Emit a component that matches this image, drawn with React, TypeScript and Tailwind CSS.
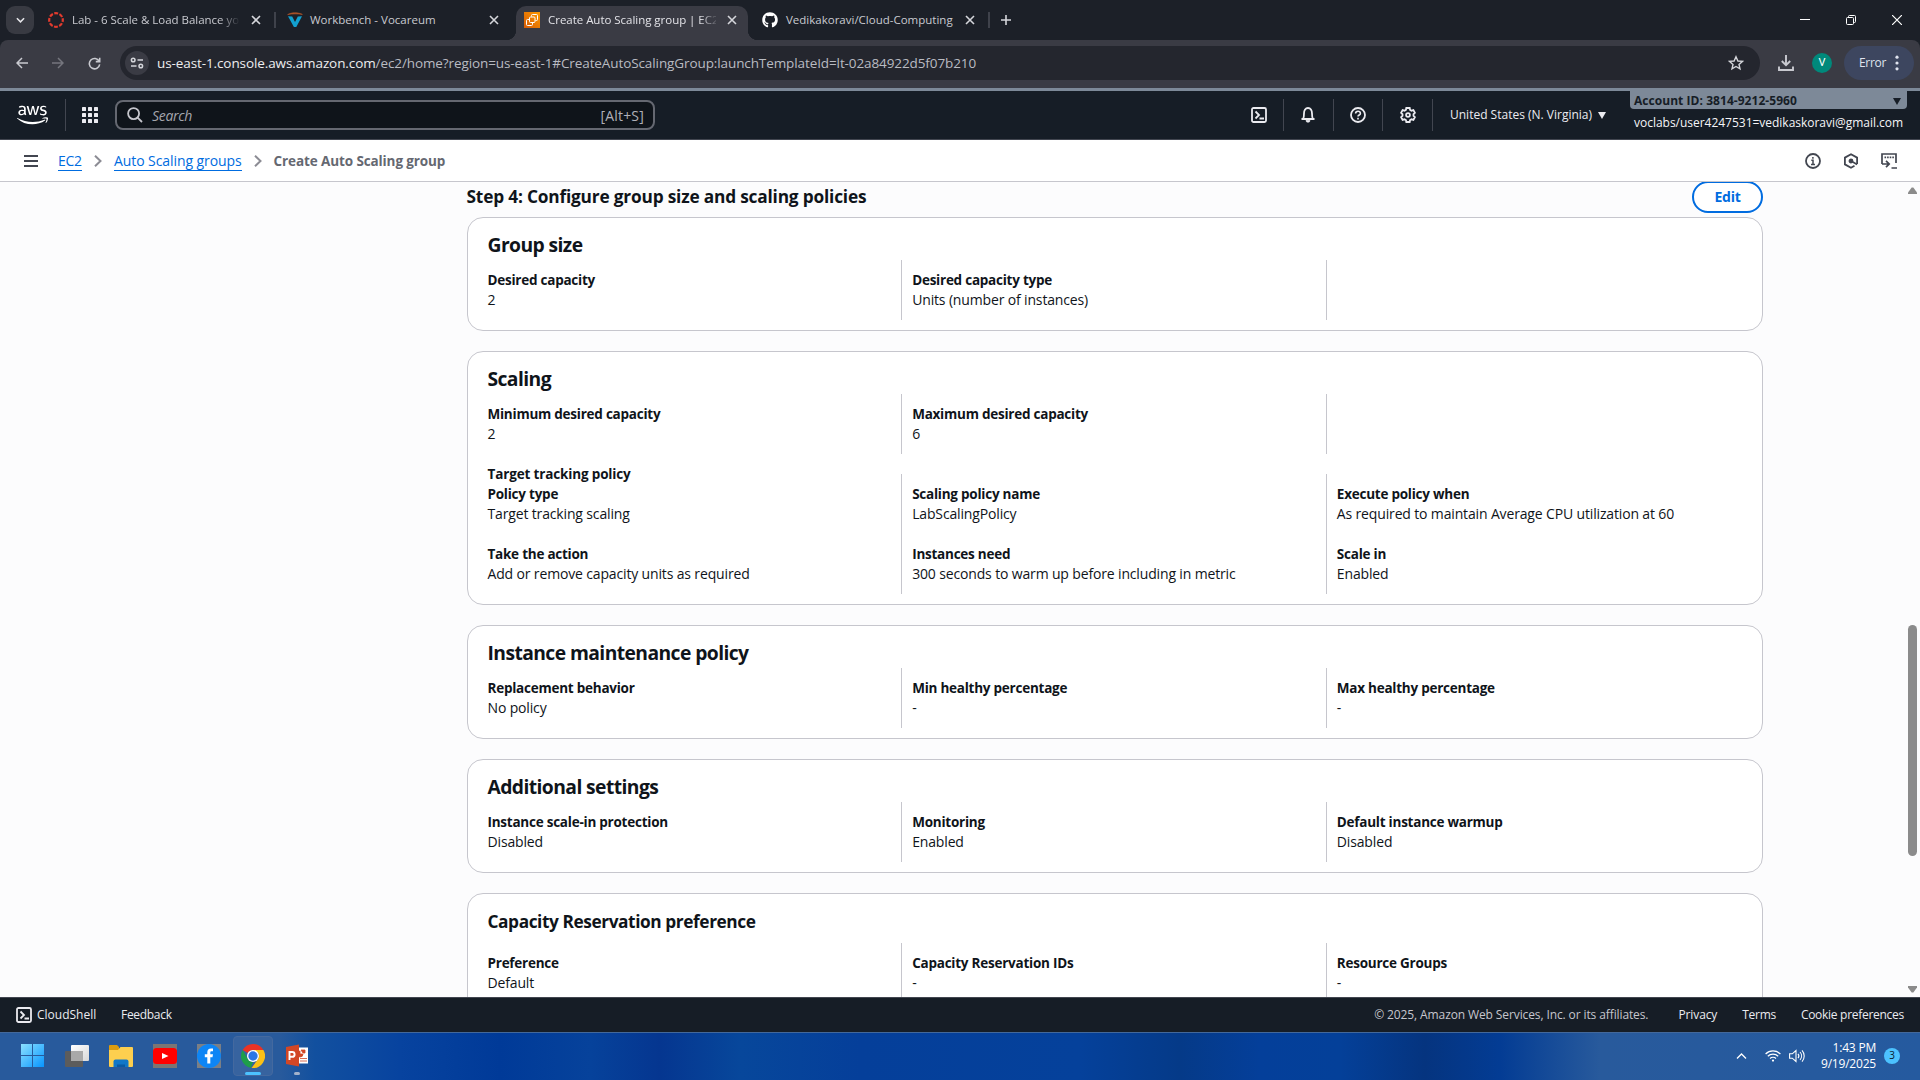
import React from "react";
import { FaAws, FaGithub } from "react-icons/fa6";

type Field = { label: string; value: string } | null;

function CloseX({ className = "" }: { className?: string }) {
  return (
    <svg viewBox="0 0 10 10" className={`h-[10px] w-[10px] shrink-0 ${className}`} stroke="#d5d6db" strokeWidth="1.6" fill="none">
      <path d="M1 1l8 8M9 1L1 9" />
    </svg>
  );
}

function CanvasIcon() {
  return (
    <svg viewBox="0 0 16 16" className="h-4 w-4 shrink-0" fill="none">
      <circle cx="8" cy="8" r="6.8" stroke="#e23b2e" strokeWidth="2.2" strokeDasharray="3.9 1.44" strokeDashoffset="1.95" />
    </svg>
  );
}

function VocareumIcon() {
  return (
    <svg viewBox="0 0 16 16" className="h-4 w-4 shrink-0">
      <path d="M1 4.2l4.2.3L8 10l2.800-5.500 4.200-.3L9.300 15H6.900z" fill="#12a0d0" />
      <path d="M.6 2.600C4.500.2 11 .2 15.400 2.400 11 1.600 5 1.700.6 2.600z" fill="#b4562a" stroke="#b4562a" strokeWidth=".6" />
    </svg>
  );
}

function Ec2Icon() {
  return (
    <svg viewBox="0 0 16 16" className="h-4 w-4 shrink-0">
      <defs>
        <linearGradient id="ec2" x1="0" y1="1" x2="1" y2="0">
          <stop offset="0" stopColor="#d45b07" />
          <stop offset="1" stopColor="#ff9900" />
        </linearGradient>
      </defs>
      <path d="M0 0h16v16H0z" fill="url(#ec2)" />
      <g fill="none" stroke="#fff" strokeWidth="1">
        <rect x="5.500" y="5" width="5.500" height="5.500" rx="1" />
        <path d="M7.500 4.500V3.500a1 1 0 0 1 1-1h4a1 1 0 0 1 1 1v4a1 1 0 0 1-1 1h-1" />
        <path d="M5 7.500H3.500a1 1 0 0 0-1 1v4a1 1 0 0 0 1 1h4a1 1 0 0 0 1-1v-1.500" />
      </g>
    </svg>
  );
}

function TabStrip() {
  return (
    <header className="flex h-10 items-stretch bg-[#1c2028] text-[11.5px] text-[#c9cad0]">
      <div className="flex w-[48px] items-center pl-[6px]">
        <div className="flex h-7 w-7 items-center justify-center rounded-[9px] bg-[#383a42]">
          <svg viewBox="0 0 10 6" className="h-[6px] w-[9px]" fill="none" stroke="#e6e6ea" strokeWidth="1.700">
            <path d="M1 1l4 4 4-4" />
          </svg>
        </div>
      </div>
      <div className="flex w-[228px] items-center">
        <CanvasIcon />
        <span className="ml-2 w-[168px] whitespace-nowrap tracking-[-0.02px] [mask-image:linear-gradient(to_right,black_88%,transparent)]">
          Lab - 6 Scale &amp; Load Balance yo
        </span>
        <CloseX className="ml-[11px]" />
        <i className="ml-[13px] h-4 w-[2px] bg-[#3f424b]" />
      </div>
      <div className="flex w-[240px] items-center pl-[11px]">
        <VocareumIcon />
        <span className="ml-[7px] w-[169px] whitespace-nowrap">Workbench - Vocareum</span>
        <CloseX className="ml-[10px]" />
      </div>
      <div className="relative mt-[6px] flex w-[232px] items-center rounded-t-[10px] bg-[#3a3b44] pb-[6px] pl-2 text-[#e3e3e8]">
        <i className="absolute -left-[10px] bottom-0 h-[10px] w-[10px] bg-[radial-gradient(circle_at_0_0,transparent_10px,#3a3b44_10.500px)]" />
        <i className="absolute -right-[10px] bottom-0 h-[10px] w-[10px] bg-[radial-gradient(circle_at_100%_0,transparent_10px,#3a3b44_10.500px)]" />
        <Ec2Icon />
        <span className="ml-2 w-[168px] whitespace-nowrap tracking-[-0.03px] [mask-image:linear-gradient(to_right,black_90%,transparent_102%)]">
          Create Auto Scaling group | EC2
        </span>
        <CloseX className="ml-[11px]" />
      </div>
      <div className="flex items-center pl-[14px]">
        <FaGithub className="h-4 w-4 text-white" />
        <span className="ml-2 w-[168px] whitespace-nowrap">Vedikakoravi/Cloud-Computing</span>
        <CloseX className="ml-[11px]" />
        <i className="ml-[13px] h-4 w-[2px] bg-[#3f424b]" />
        <svg viewBox="0 0 12 12" className="ml-[10px] h-3 w-3" stroke="#d5d6db" strokeWidth="1.600">
          <path d="M6 1v10M1 6h10" />
        </svg>
      </div>
      <div className="ml-auto flex items-center gap-9 pr-[18px]">
        <svg viewBox="0 0 10 10" className="h-[10px] w-[10px]" stroke="#fff"><path d="M0 4.500h10" /></svg>
        <svg viewBox="0 0 10 10" className="h-[10px] w-[10px]" stroke="#fff" fill="none">
          <rect x=".5" y="2.500" width="7" height="7" rx="1" />
          <path d="M2.500 2.500v-1a1 1 0 0 1 1-1h5a1 1 0 0 1 1 1v5a1 1 0 0 1-1 1h-1" />
        </svg>
        <svg viewBox="0 0 10 10" className="h-[10px] w-[10px]" stroke="#fff" strokeWidth="1.200"><path d="M0 0l10 10M10 0L0 10" /></svg>
      </div>
    </header>
  );
}

function AddressBar() {
  return (
    <div className="bg-[#1c2028]">
      <div className="flex h-12 items-center rounded-t-lg bg-[#3a3b44] pb-[2px] pr-[6px]">
        <div className="flex w-[120px] items-center gap-6 pl-4">
          <svg viewBox="0 0 12 12" className="h-3 w-3" stroke="#c9cad0" strokeWidth="1.500" fill="none"><path d="M12 6H1M6 1L1 6l5 5" /></svg>
          <svg viewBox="0 0 12 12" className="h-3 w-3" stroke="#75767e" strokeWidth="1.500" fill="none"><path d="M0 6h11M6 1l5 5-5 5" /></svg>
          <svg viewBox="0 0 14 14" className="h-[13px] w-[13px]" stroke="#c9cad0" strokeWidth="1.700" fill="none">
            <path d="M12 4.500A5.600 5.600 0 1 0 12.600 8M12.600 .8v4.200H8.400" />
          </svg>
        </div>
        <div className="flex h-[34px] w-[1640px] items-center rounded-full bg-[#24262e] pl-[5px] pr-[16px]">
          <div className="flex h-6 w-6 items-center justify-center rounded-full bg-[#3a3b44]">
            <svg viewBox="0 0 14 12" className="h-3 w-[14px]" fill="none" stroke="#d5d6db" strokeWidth="1.500">
              <circle cx="3.200" cy="3" r="1.800" /><path d="M7.500 3H13M1 9h5.500" /><circle cx="10.800" cy="9" r="1.800" />
            </svg>
          </div>
          <span className="ml-2 whitespace-nowrap text-[13.5px] tracking-[-0.1px] text-[#b9bbc2]">
            <span className="text-[#ededf0]">us-east-1.console.aws.amazon.com</span>
            /ec2/home?region=us-east-1#CreateAutoScalingGroup:launchTemplateId=lt-02a84922d5f07b210
          </span>
          <svg viewBox="0 0 16 16" className="ml-auto h-4 w-4" fill="none" stroke="#d5d6db" strokeWidth="1.400">
            <path d="M8 1.800l1.900 4.200 4.500.4-3.400 3 1 4.500L8 11.500l-4 2.400 1-4.500-3.400-3 4.500-.4z" />
          </svg>
        </div>
        <svg viewBox="0 0 16 16" className="ml-[18px] h-4 w-4" fill="none" stroke="#c9cad0" strokeWidth="1.900">
          <path d="M8 0v10M3.800 6L8 10.200 12.200 6M1 11.500V15h14v-3.500" />
        </svg>
        <div className="ml-[18px] flex h-5 w-5 items-center justify-center rounded-full bg-[#00897b] font-['Roboto'] text-[11px] text-white">V</div>
        <div className="ml-3 flex h-[34px] w-[70px] items-center rounded-full bg-[#3d465f] pl-[15px] text-[12px] text-[#dfe3ee]">
          <span className="w-[26px] tracking-[-0.3px]">Error</span>
          <svg viewBox="0 0 4 16" className="ml-[10px] h-4 w-1" fill="#dfe3ee">
            <circle cx="2" cy="2.200" r="1.600" /><circle cx="2" cy="8" r="1.600" /><circle cx="2" cy="13.800" r="1.600" />
          </svg>
        </div>
      </div>
    </div>
  );
}

function TerminalIcon({ className = "" }: { className?: string }) {
  return (
    <svg viewBox="0 0 16 16" className={`h-4 w-4 shrink-0 ${className}`} fill="none" stroke="#ebebf0" strokeWidth="1.800">
      <rect x="1" y="1" width="14" height="14" rx="1.500" />
      <path d="M4.500 4.500L8 8l-3.500 3.500M8.500 11.500H13" />
    </svg>
  );
}

function NavCell({ children }: { children: React.ReactNode }) {
  return <div className="flex h-8 w-[49.7px] items-center justify-center border-r border-[#424650]">{children}</div>;
}

function AwsNav() {
  return (
    <nav className="flex h-[49px] border-b border-[#424650] bg-[#161d26] text-[12px] text-[#ebebf0]">
      <div className="flex items-center">
        <FaAws className="ml-[17px] h-[26px] w-[31px] text-white" />
        <i className="ml-[17px] h-8 w-px bg-[#424650]" />
        <svg viewBox="0 0 16 16" className="ml-4 h-4 w-4" fill="#ebebf0">
          {[0, 6, 12].map((y) => [0, 6, 12].map((x) => <rect key={`${x}-${y}`} x={x} y={y} width="4" height="4" rx=".6" />))}
        </svg>
        <div className="ml-[17px] flex h-[30px] w-[540px] items-center rounded-lg border-2 border-[#656871] bg-[#0f141a] pl-[10px] pr-[9px] text-[14px] text-[#a4a4ad]">
          <svg viewBox="0 0 16 16" className="h-4 w-4" fill="none" stroke="#c6c6cd" strokeWidth="1.800">
            <circle cx="6.600" cy="6.600" r="5.500" /><path d="M10.600 10.600L15 15" />
          </svg>
          <span className="ml-[9px] italic tracking-[-0.3px]">Search</span>
          <span className="ml-auto tracking-[0.2px] text-[#b0b0b8]">[Alt+S]</span>
        </div>
      </div>
      <div className="ml-auto flex items-center">
        <NavCell><TerminalIcon /></NavCell>
        <NavCell>
          <svg viewBox="0 0 16 16" className="h-4 w-4" fill="none" stroke="#ebebf0" strokeWidth="1.800">
            <path d="M1.500 12h13M3 12c1-1.300 1-3 1-5.500C4 3.500 5.500 1 8 1s4 2.500 4 5.500c0 2.500 0 4.200 1 5.500" /><path d="M6 13.500a2 1.700 0 0 0 4 0z" fill="#ebebf0" strokeWidth=".8" />
          </svg>
        </NavCell>
        <NavCell>
          <svg viewBox="0 0 16 16" className="h-4 w-4" fill="none" stroke="#ebebf0" strokeWidth="1.800">
            <circle cx="8" cy="8" r="7" /><path d="M5.600 6.600C5.600 5 6.600 4.300 8 4.300s2.400.8 2.400 2.100C10.400 8 8 8 8 9.600M8 10.800v1.600" strokeWidth="1.600" />
          </svg>
        </NavCell>
        <NavCell>
          <svg viewBox="0 0 16 16" className="h-4 w-4" fill="none" stroke="#ebebf0" strokeWidth="1.800">
            <path d="M6.300 1h3.400l.4 1.900 1.400.8 1.900-.6 1.500 2.800L13.500 7.200v1.600l1.400 1.300-1.500 2.800-1.900-.6-1.400.8-.4 1.900H6.300l-.4-1.900-1.400-.8-1.900.6-1.500-2.800L2.500 8.800V7.200L1.100 5.900l1.500-2.800 1.900.6 1.400-.8z" />
            <circle cx="8" cy="8" r="1.900" />
          </svg>
        </NavCell>
        <span className="ml-[17px] w-[142px] whitespace-nowrap font-medium">United States (N. Virginia)</span>
        <svg viewBox="0 0 8 7" className="ml-[6px] h-[7px] w-2" fill="#ebebf0"><path d="M0 0h8L4 7z" /></svg>
      </div>
      <div className="ml-6 mr-[13px] flex w-[277px] flex-col">
        <div className="flex h-[18px] items-center justify-between rounded-b bg-[#7d8998] pl-1 pr-[6px] pt-[2px] font-bold leading-[18px] tracking-[0.05px] text-[#161d26]">
          <span>Account ID: 3814-9212-5960</span>
          <svg viewBox="0 0 8 7" className="h-[7px] w-2" fill="#161d26"><path d="M0 0h8L4 7z" /></svg>
        </div>
        <span className="mt-[5px] whitespace-nowrap pl-1 leading-[18px] tracking-[-0.02px] text-[#f5f5f8]">voclabs/user4247531=vedikaskoravi@gmail.com</span>
      </div>
    </nav>
  );
}

function Crumb() {
  return (
    <svg viewBox="0 0 8 12" className="mx-[12px] h-3 w-2" fill="none" stroke="#8c8c94" strokeWidth="2"><path d="M1 .7L6.500 6 1 11.300" /></svg>
  );
}

function Breadcrumbs() {
  return (
    <div className="flex h-[42px] items-center border-b border-[#c6c6cd] bg-white pl-6 pr-[23px] text-[14px]">
      <svg viewBox="0 0 14 12" className="mr-5 h-3 w-[14px]" stroke="#424650" strokeWidth="2"><path d="M0 1h14M0 6h14M0 11h14" /></svg>
      <a className="mt-px w-6 border-b border-[#006ce0] leading-[18px] tracking-[-0.3px] text-[#006ce0]">EC2</a>
      <Crumb />
      <a className="mt-px border-b border-[#006ce0] leading-[18px] tracking-[-0.08px] text-[#006ce0]">Auto Scaling groups</a>
      <Crumb />
      <span className="mt-px text-[13.5px] font-bold tracking-[-0.11px] text-[#656871]">Create Auto Scaling group</span>
      <div className="ml-auto flex items-center gap-[22px]">
        <svg viewBox="0 0 16 16" className="h-4 w-4" fill="none" stroke="#424650" strokeWidth="1.800">
          <circle cx="8" cy="8" r="7" /><path d="M6.300 7.300H8v4M6 11.500h4M7.900 4v1.800" strokeWidth="1.500" />
        </svg>
        <svg viewBox="0 0 16 16" className="h-4 w-4" fill="none" stroke="#424650" strokeWidth="1.800">
          <path d="M14.100 11V4.600L8 1.200 1.900 4.600v6.800L8 14.800l3.500-2" /><circle cx="8" cy="8" r="1.500" fill="#424650" /><path d="M8.500 8.200l5.600 3.300" strokeWidth="1.600" />
        </svg>
        <svg viewBox="0 0 16 16" className="h-4 w-4" fill="none" stroke="#424650" strokeWidth="1.700">
          <path d="M1 11V1h14v9M10.500 15H16M1 11h6.500M5 7.800L8.200 11 5 14.200" /><path d="M3.500 4.300h10" strokeDasharray="1.600 1" />
        </svg>
      </div>
    </div>
  );
}

function FieldGrid({ rows }: { rows: Field[][] }) {
  return (
    <div className="-ml-[11.7px] grid w-[1274px] grid-cols-3">
      {[0, 1, 2].map((c) => (
        <div key={c} className={`flex flex-col gap-5 py-[10px] pl-[10.2px] ${c ? "border-l border-[#c6c6cd]" : "border-l border-transparent"}`}>
          {rows.map((r, i) => (
            <dl key={i} className="h-10 whitespace-nowrap text-[14px] leading-5">
              {r[c] && (
                <>
                  <dt className="text-[13.5px] font-bold tracking-[-0.24px]">{r[c]!.label}</dt>
                  <dd className="tracking-[-0.15px]">{r[c]!.value}</dd>
                </>
              )}
            </dl>
          ))}
        </div>
      ))}
    </div>
  );
}

function Card({ title, small, children }: { title: string; small?: boolean; children: React.ReactNode }) {
  return (
    <section className={`rounded-2xl border border-[#c6c6cd] bg-white px-5 pb-[10px] ${small ? "pt-[16px]" : "pt-[15px]"}`}>
      <h2 className={small ? "-ml-[0.5px] h-[33px] text-[17.3px] font-bold leading-6 tracking-[-0.42px]" : "-ml-[0.5px] h-[27px] text-[19.3px] font-bold leading-6 tracking-[-0.58px]"}>
        {title}
      </h2>
      {children}
    </section>
  );
}

const f = (label: string, value: string): Field => ({ label, value });

function Content() {
  return (
    <main className="flex h-[815px] overflow-hidden bg-[#fcfcfd] text-[#0f141a]">
      <div className="ml-[467px] flex w-[1296px] shrink-0 flex-col gap-5">
        <div className="-mt-px flex flex-col gap-[4px]">
          <div className="flex h-8 shrink-0 items-center justify-between">
            <h2 className="-ml-[0.5px] pb-px text-[17.3px] font-bold tracking-[-0.19px]">Step 4: Configure group size and scaling policies</h2>
            <button className="h-8 w-[71px] rounded-full border-2 border-[#006ce0] bg-white pb-[2px] text-[14px] font-bold tracking-[-0.2px] text-[#006ce0]">Edit</button>
          </div>
          <Card title="Group size">
            <FieldGrid rows={[[f("Desired capacity", "2"), f("Desired capacity type", "Units (number of instances)"), null]]} />
          </Card>
        </div>
        <Card title="Scaling">
          <FieldGrid rows={[[f("Minimum desired capacity", "2"), f("Maximum desired capacity", "6"), null]]} />
          <p className="-mb-[10px] -ml-[0.5px] mt-[10px] text-[13.5px] font-bold leading-5 tracking-[-0.15px]">Target tracking policy</p>
          <FieldGrid
            rows={[
              [
                f("Policy type", "Target tracking scaling"),
                f("Scaling policy name", "LabScalingPolicy"),
                f("Execute policy when", "As required to maintain Average CPU utilization at 60"),
              ],
              [
                f("Take the action", "Add or remove capacity units as required"),
                f("Instances need", "300 seconds to warm up before including in metric"),
                f("Scale in", "Enabled"),
              ],
            ]}
          />
        </Card>
        <Card title="Instance maintenance policy">
          <FieldGrid rows={[[f("Replacement behavior", "No policy"), f("Min healthy percentage", "-"), f("Max healthy percentage", "-")]]} />
        </Card>
        <Card title="Additional settings">
          <FieldGrid rows={[[f("Instance scale-in protection", "Disabled"), f("Monitoring", "Enabled"), f("Default instance warmup", "Disabled")]]} />
        </Card>
        <Card title="Capacity Reservation preference" small>
          <FieldGrid rows={[[f("Preference", "Default"), f("Capacity Reservation IDs", "-"), f("Resource Groups", "-")]]} />
        </Card>
      </div>
      <div className="ml-auto flex w-[15px] flex-col items-center pb-[4px] pt-[5px]">
        <svg viewBox="0 0 9 7" className="h-[7px] w-[9px]" fill="#8b8b8b"><path d="M3.700 .5h1.600L9 5.500V7H0V5.500z" /></svg>
        <i className="mt-[431px] h-[231px] w-[9px] rounded-full bg-[#8b8b8b]" />
        <svg viewBox="0 0 9 7" className="mt-auto h-[7px] w-[9px]" fill="#8b8b8b"><path d="M3.700 6.500h1.600L9 1.500V0H0v1.500z" /></svg>
      </div>
    </main>
  );
}

function Footer() {
  return (
    <footer className="flex h-[35px] items-center border-t border-[#424650] bg-[#161d26] pl-4 pr-4 text-[12px] text-[#ebebf0]">
      <TerminalIcon />
      <span className="ml-[5px] w-[84px]">CloudShell</span>
      <span className="tracking-[-0.3px]">Feedback</span>
      <span className="ml-auto tracking-[-0.11px] text-[#c6c6cd]">© 2025, Amazon Web Services, Inc. or its affiliates.</span>
      <span className="ml-[30px] tracking-[-0.1px]">Privacy</span>
      <span className="ml-[25px] tracking-[-0.3px]">Terms</span>
      <span className="ml-[25px] tracking-[-0.28px]">Cookie preferences</span>
    </footer>
  );
}

function Taskbar() {
  return (
    <div className="flex h-12 items-center border-t border-[#43689a] bg-[linear-gradient(to_right,#285a9c_0px,#285a9c_280px,#12509f_315px,#07439f_400px,#003a98_500px,#06429b_590px,#053690_660px,#07479b_740px,#053f9a_860px,#05419b_1080px,#053a88_1180px,#043f9a_1260px,#044099_1340px,#05347f_1425px,#033c94_1500px,#285a9c_1600px,#255a9f_1920px)] pb-[2px]">
      <svg viewBox="0 0 23 23" className="ml-[21px] h-[23px] w-[23px]">
        <defs><linearGradient id="win" x1="0" y1="0" x2="1" y2="1"><stop offset="0" stopColor="#8ce1ff" /><stop offset="1" stopColor="#0795ff" /></linearGradient></defs>
        <path fill="url(#win)" d="M0 0h11v11H0zM12 0h11v11H12zM0 12h11v11H0zM12 12h11v11H12z" />
      </svg>
      <svg viewBox="0 0 24 22" className="ml-[21px] h-[22px] w-6">
        <defs><linearGradient id="tv" x1="0" y1="0" x2="1" y2="1"><stop offset="0" stopColor="#fff" /><stop offset="1" stopColor="#d8d8d8" /></linearGradient></defs>
        <rect x="6" width="18" height="16" rx="1" fill="url(#tv)" />
        <rect y="6" width="18" height="16" rx="1" fill="#5c5c5c" /><path d="M6 6h12v10H6z" fill="#a9a9a9" />
      </svg>
      <svg viewBox="0 0 24 22" className="ml-5 h-[22px] w-6">
        <path d="M0 1a1 1 0 0 1 1-1h7l2 2v6H0z" fill="#dd9c0e" />
        <path d="M0 5h9l2.500-3H23a1 1 0 0 1 1 1v18a1 1 0 0 1-1 1H1a1 1 0 0 1-1-1z" fill="#fdcf4f" />
        <path d="M4.500 22v-5.500a2 2 0 0 1 2-2h11a2 2 0 0 1 2 2V22z" fill="#1277c8" /><path d="M8 22v-2.500h8V22z" fill="#0b5aa3" />
      </svg>
      <div className="ml-5 flex h-6 w-6 items-center bg-[#7b7573]">
        <svg viewBox="0 0 24 16" className="h-4 w-6"><rect width="24" height="16" rx="3.500" fill="#f00" /><path d="M9 5l6.500 3L9 11z" fill="#fff" /></svg>
      </div>
      <div className="ml-5 h-6 w-6 bg-[#7b7f85]">
        <svg viewBox="0 0 24 24" className="h-6 w-6">
          <circle cx="12" cy="12" r="12" fill="#0d85f5" />
          <path d="M10.300 19.500v-6.300H7.800v-3h2.500V8.300c0-2.600 1.300-3.900 3.700-3.900.8 0 1.500.1 2 .2v2.700h-1.300c-1.100 0-1.400.5-1.400 1.400v1.500h2.700l-.5 3h-2.200v6.300z" fill="#fff" />
        </svg>
      </div>
      <div className="ml-3 flex h-10 w-10 flex-col items-center rounded border border-[#44699f] bg-[#37639f] pt-[7px]">
        <svg viewBox="0 0 24 24" className="h-6 w-6">
          <path d="M12 0a12 12 0 0 1 10.400 6H12a6 6 0 0 0-5.200 3L1.600 6A12 12 0 0 1 12 0z" fill="#ea3324" />
          <path d="M1.600 6l5.200 9A6 6 0 0 0 12 18l-2.200 5.800A12 12 0 0 1 1.600 6z" fill="#1e9e4a" />
          <path d="M22.400 6A12 12 0 0 1 10.500 23.900L17.200 15a6 6 0 0 0 0-6L12 6z" fill="#fbc116" />
          <circle cx="12" cy="12" r="6" fill="#fff" /><circle cx="12" cy="12" r="4.700" fill="#2a76e6" />
        </svg>
        <i className="mt-1 h-[3px] w-4 shrink-0 rounded-full bg-[#4cc2ff]" />
      </div>
      <div className="ml-3 flex h-10 w-6 flex-col items-center pt-2">
        <svg viewBox="0 0 24 22" className="h-[23px] w-6">
          <rect x="12" y="3" width="11" height="16" fill="#fff" />
          <path d="M15 6.500a3 3 0 1 0 3 3h-3zM16 5.500h4v3h-2zM15 14h7M15 16.500h7" fill="#d24726" stroke="#d24726" strokeWidth=".8" />
          <path d="M1 2.500L14 0v22L1 19.500z" fill="#d24726" />
          <path d="M4.500 15.500v-8h2.700a2.300 2.300 0 0 1 0 4.800H4.500" fill="none" stroke="#fff" strokeWidth="1.900" />
        </svg>
        <i className="mt-[5px] h-[3px] w-[6px] shrink-0 rounded-full bg-[#a3b2cb]" />
      </div>
      <div className="ml-auto flex items-center pr-5 text-white">
        <svg viewBox="0 0 10 6" className="h-[6px] w-[11px]" fill="none" stroke="#fff" strokeWidth="1.300"><path d="M.5 5.500L5 1l4.500 4.500" /></svg>
        <svg viewBox="0 0 16 13" className="ml-[18px] h-[13px] w-4" fill="none" stroke="#fff" strokeWidth="1.200">
          <path d="M.6 5a10.500 10.500 0 0 1 14.800 0M2.800 7.300a7.400 7.400 0 0 1 10.400 0M5 9.500a4.300 4.300 0 0 1 6 0" /><circle cx="8" cy="11.600" r="1.100" fill="#fff" stroke="none" />
        </svg>
        <svg viewBox="0 0 16 14" className="ml-2 h-[14px] w-4" fill="none" stroke="#fff" strokeWidth="1.100">
          <path d="M.6 4.800h2.700L7 1.500v11L3.300 9.200H.6zM9 4.800a3.500 3.500 0 0 1 0 4.400M11 3a6 6 0 0 1 0 8M13 1.300a8.500 8.500 0 0 1 0 11.400" />
        </svg>
        <div className="ml-[10px] w-[61px] text-right text-[12px] leading-4 tracking-[-0.2px]">
          <div>1:43 PM</div>
          <div>9/19/2025</div>
        </div>
        <div className="ml-2 flex h-4 w-4 items-center justify-center rounded-full bg-[#4cc2ff] text-[10px] text-[#0b1b2b]">3</div>
      </div>
    </div>
  );
}

export default function App() {
  return (
    <div className="flex h-[1080px] w-[1920px] flex-col overflow-hidden font-['Open_Sans','Noto_Sans',sans-serif]">
      <TabStrip />
      <AddressBar />
      <div className="h-[3px] shrink-0 bg-[#7d8998]" />
      <AwsNav />
      <Breadcrumbs />
      <Content />
      <Footer />
      <Taskbar />
    </div>
  );
}
